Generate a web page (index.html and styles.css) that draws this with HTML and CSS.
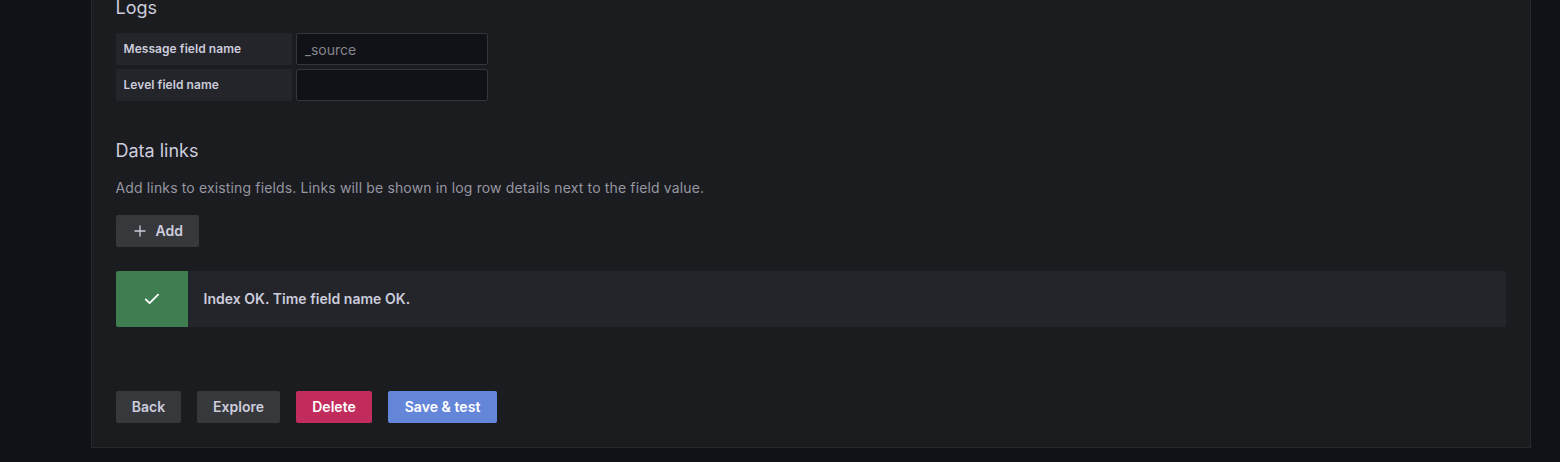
FILE: index.html
```html
<!DOCTYPE html>
<html lang="en">
<head>
<meta charset="utf-8">
<title>Data source settings</title>
<link rel="stylesheet" href="styles.css">
</head>
<body>
<main class="panel">
  <section class="logs">
    <h3 class="heading">Logs</h3>
    <div class="field"><label class="label" for="msg">Message field name</label><input class="input" id="msg" placeholder="_source"></div>
    <div class="field"><label class="label" for="lvl">Level field name</label><input class="input" id="lvl"></div>
  </section>
  <section class="links">
    <h3 class="heading">Data links</h3>
    <p class="hint">Add links to existing fields. Links will be shown in log row details next to the field value.</p>
    <button class="btn btn-add"><svg class="plus" viewBox="0 0 12 12"><path d="M6 1v10M1 6h10"/></svg><span>Add</span></button>
  </section>
  <div class="alert">
    <div class="alert-icon"><svg class="check" viewBox="0 0 16 12"><path d="M1.7 6.4l3.9 3.7L14.1 1.6"/></svg></div>
    <div class="alert-text">Index OK. Time field name OK.</div>
  </div>
  <div class="actions">
    <button class="btn btn-back">Back</button>
    <button class="btn btn-explore">Explore</button>
    <button class="btn btn-delete">Delete</button>
    <button class="btn btn-save">Save &amp; test</button>
  </div>
</main>
</body>
</html>
```
FILE: styles.css
```css
* { box-sizing: border-box; }
body { margin: 0; height: 462px; overflow: hidden; background: #111217; color: #ccccdc; font-family: Inter, sans-serif; font-size: 14px; }
.panel { display: flow-root; width: 1440px; height: 448px; margin-left: 91px; padding: 0 24px; background: #1b1c20; border: 1px solid #27282c; border-top: 0; }
.heading { margin: 0 0 0 -0.5px; font-size: 18px; font-weight: 400; line-height: 22px; }
.logs { height: 139px; margin-top: -3px; }
.logs .heading { margin-bottom: 14px; }
.field { display: flex; gap: 4px; margin-bottom: 4px; }
.label { width: 176px; height: 32px; padding: 0 7.5px; line-height: 32px; font-size: 12px; font-weight: 600; letter-spacing: .06px; background: #24252a; border-radius: 2px; }
.input { width: 192px; height: 32px; padding: 1px 7.5px 0; font: 400 14px Inter, sans-serif; color: #ccccdc; background: #111217; border: 1px solid #35363a; border-radius: 2px; outline: 0; }
.input::placeholder { color: #84848d; opacity: 1; }
.links { padding-top: 4px; }
.hint { margin: 15px 0 0 -0.5px; line-height: 22px; color: #9696a1; font-weight: 400; letter-spacing: .145px; }
.btn { height: 32px; padding: 0 0 2px; border: 0; border-radius: 2px; background: #37383c; color: #ccccdc; font: 600 14px Inter, sans-serif; letter-spacing: .05px; }
.btn-add { display: flex; align-items: center; width: 83px; margin-top: 16px; padding-left: 18px; gap: 9.5px; }
.plus { position: relative; top: 1px; width: 12px; height: 12px; fill: none; stroke: currentColor; stroke-width: 1.3; stroke-linecap: round; }
.alert { display: flex; height: 56px; margin-top: 24px; background: #24252a; border-radius: 2px; overflow: hidden; }
.alert-icon { display: flex; align-items: center; justify-content: center; width: 72px; background: #3f7e50; }
.check { width: 16px; height: 12px; fill: none; stroke: #fff; stroke-width: 1.8; stroke-linecap: round; stroke-linejoin: round; }
.alert-text { padding-left: 15.5px; line-height: 56px; font-weight: 600; letter-spacing: .03px; }
.actions { display: flex; gap: 16px; margin-top: 64px; }
.btn-back { width: 65px; }
.btn-explore { width: 83px; }
.btn-delete { width: 76px; background: #c22c5d; color: #fff; }
.btn-save { width: 109px; background: #6486d8; color: #fff; }
```
